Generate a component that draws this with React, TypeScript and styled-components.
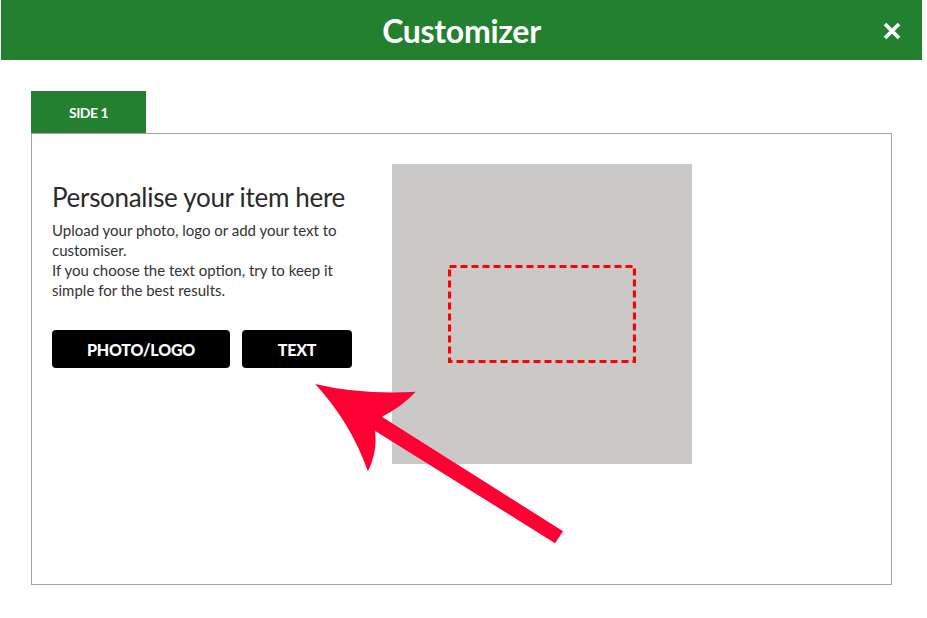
import React from "react";
import styled, { createGlobalStyle } from "styled-components";

const GlobalStyle = createGlobalStyle`
  html, body { margin: 0; padding: 0; background: #ffffff; }
  body { font-family: Lato, "Open Sans", sans-serif; color: #333; }
  * { box-sizing: border-box; }
`;

const Page = styled.div`
  width: 921px;
  margin-left: 1px;
`;

const Header = styled.header`
  height: 60px;
  background: #23802f;
  display: flex;
  align-items: center;
  justify-content: center;
  position: relative;
`;

const Title = styled.h1`
  margin: 0;
  font-family: Lato, sans-serif;
  font-weight: 700;
  font-size: 32px;
  color: #ffffff;
  letter-spacing: -0.3px;
`;

const CloseButton = styled.button`
  position: absolute;
  right: 20px;
  top: 21px;
  width: 20px;
  height: 20px;
  padding: 0;
  border: none;
  background: transparent;
  cursor: pointer;
  display: flex;
  align-items: center;
  justify-content: center;
`;

const Body = styled.main`
  padding: 31px 30px 0;
`;

const Tab = styled.div`
  width: 115px;
  height: 42px;
  background: #23802f;
  color: #fff;
  font-family: Lato, sans-serif;
  font-weight: 700;
  font-size: 14px;
  letter-spacing: -0.5px;
  display: flex;
  align-items: center;
  justify-content: center;
`;

const Panel = styled.section`
  position: relative;
  height: 452px;
  border: 1px solid #a3a3a3;
  padding: 30px 20px;
  display: flex;
  gap: 40px;
`;

const Intro = styled.div`
  width: 300px;
  padding-top: 17px;
`;

const Heading = styled.h2`
  margin: 0 0 7px;
  font-family: Lato, sans-serif;
  font-weight: 400;
  font-size: 26px;
  line-height: 32px;
  color: #2a2a2a;
  letter-spacing: -0.3px;
  white-space: nowrap;
`;

const Text = styled.p`
  margin: 0;
  font-size: 15px;
  line-height: 20px;
  color: #333;
  width: 300px;
`;

const Actions = styled.div`
  display: flex;
  gap: 12px;
  margin-top: 30px;
`;

const Button = styled.button<{ $w: number }>`
  width: ${(p) => p.$w}px;
  height: 38px;
  background: #000;
  color: #fff;
  border: none;
  border-radius: 4px;
  font-family: Lato, sans-serif;
  font-weight: 900;
  font-size: 16px;
  letter-spacing: -0.2px;
  cursor: pointer;
`;

const Preview = styled.div`
  flex: none;
  width: 300px;
  height: 300px;
  background: #cac9c8;
  padding: 101px 0 0 56px;
`;

const PrintArea = styled.svg`
  display: block;
  width: 188px;
  height: 98px;
`;

const ArrowSvg = styled.svg`
  position: absolute;
  left: 0;
  top: 0;
  width: 100%;
  height: 100%;
  pointer-events: none;
  overflow: visible;
`;

export default function App() {
  return (
    <Page>
      <GlobalStyle />
      <Header>
        <Title>Customizer</Title>
        <CloseButton aria-label="Close">
          <svg width="18" height="18" viewBox="0 0 18 18">
            <path d="M2 2 L16 16 M16 2 L2 16" stroke="#fff" strokeWidth="3.8" strokeLinecap="butt" />
          </svg>
        </CloseButton>
      </Header>
      <Body>
        <Tab>SIDE 1</Tab>
        <Panel>
          <Intro>
            <Heading>Personalise your item here</Heading>
            <Text>
              Upload your photo, logo or add your text to customiser.
              <br />
              If you choose the text option, try to keep it simple for the best results.
            </Text>
            <Actions>
              <Button $w={178}>PHOTO/LOGO</Button>
              <Button $w={110}>TEXT</Button>
            </Actions>
          </Intro>
          <Preview>
            <PrintArea viewBox="0 0 188 98">
              <rect
                x="1.5"
                y="1.5"
                width="185"
                height="95"
                fill="none"
                stroke="#ff0000"
                strokeWidth="3.2"
                strokeDasharray="7 4"
              />
            </PrintArea>
          </Preview>
          <ArrowSvg viewBox="0 0 862 452">
            <g transform="translate(-32 -134)">
              <path
                d="M316 385 Q362 396 417 393 Q402 409 383 418 L565 533 L557 545 L376 432 Q379 452 369 473 Q352 424 316 385 Z"
                fill="#ff0033"
              />
            </g>
          </ArrowSvg>
        </Panel>
      </Body>
    </Page>
  );
}
